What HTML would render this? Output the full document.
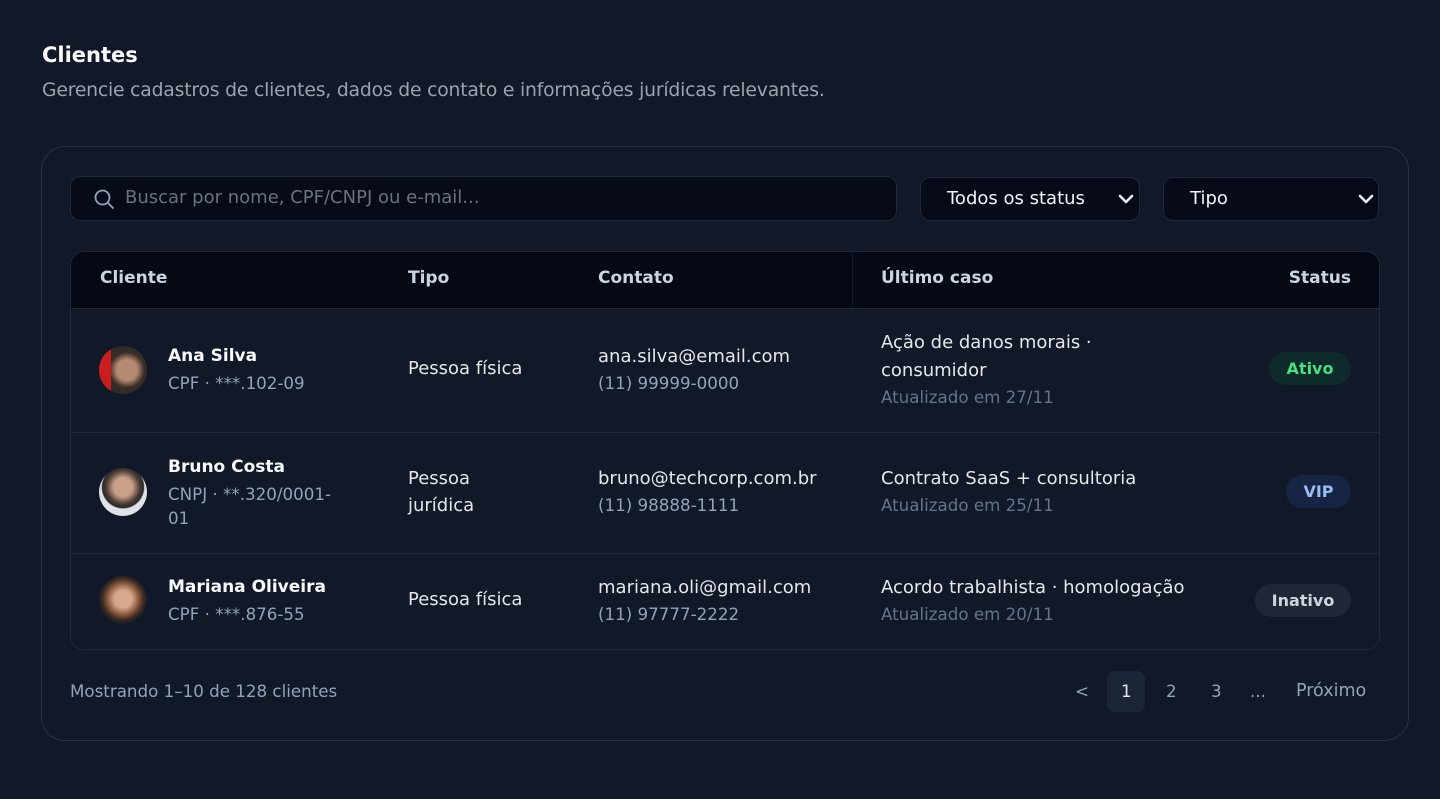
<!DOCTYPE html>
<html><head><meta charset="utf-8"><style>
*{box-sizing:border-box;margin:0;padding:0}
body{width:1440px;height:799px;background:#111827;font-family:"DejaVu Sans","Liberation Sans",sans-serif;color:#e5e7eb;position:relative;overflow:hidden}
.a{position:absolute;white-space:nowrap}
.t{font-size:18px;color:#e5e7eb}
.s{font-size:16.7px;color:#94a3b8}
.m{font-size:16.7px;color:#64748b}
.h{font-size:17px;font-weight:bold;color:#cbd5e1;top:268px}
.av{position:absolute;width:48px;height:48px;border-radius:50%;left:99px}
.badge{position:absolute;height:33px;border-radius:17px;font-size:16px;font-weight:bold;display:flex;align-items:center;justify-content:center}
.line{position:absolute;left:71px;width:1308px;height:1px;background:#1f2a3b}
.n{font-size:17px;font-weight:bold;color:#f8fafc}
</style></head><body>
<div class="a" style="left:42px;top:43px;font-size:21px;font-weight:bold;color:#f8fafc">Clientes</div>
<div class="a" style="left:42px;top:80px;font-size:18.8px;color:#9ca3af;letter-spacing:-0.2px">Gerencie cadastros de clientes, dados de contato e informações jurídicas relevantes.</div>

<div class="a" style="left:41px;top:146px;width:1368px;height:595px;border:1px solid #263247;border-radius:24px;background:#111827"></div>

<div class="a" style="left:70px;top:176px;width:827px;height:45px;border:1px solid #1e293b;border-radius:10px;background:#060b17"></div>
<svg class="a" style="left:92px;top:187px" width="24" height="24" viewBox="0 0 24 24" fill="none" stroke="#94a3b8" stroke-width="1.8" stroke-linecap="round"><circle cx="10.5" cy="10.5" r="7"/><path d="M16 16l5 5"/></svg>
<div class="a" style="left:125px;top:187px;font-size:18px;color:#6b7280">Buscar por nome, CPF/CNPJ ou e-mail...</div>

<div class="a" style="left:920px;top:177px;width:220px;height:44px;border:1px solid #1e293b;border-radius:10px;background:#060b17"></div>
<div class="a t" style="left:947px;top:188px;color:#f1f5f9">Todos os status</div>
<svg class="a" style="left:1117px;top:191px" width="18" height="16" viewBox="0 0 18 16" fill="none" stroke="#f1f5f9" stroke-width="2.6" stroke-linecap="round" stroke-linejoin="round"><path d="M3 5l6 6 6-6"/></svg>
<div class="a" style="left:1163px;top:177px;width:216px;height:44px;border:1px solid #1e293b;border-radius:10px;background:#060b17"></div>
<div class="a t" style="left:1190px;top:188px;color:#f1f5f9">Tipo</div>
<svg class="a" style="left:1357px;top:191px" width="18" height="16" viewBox="0 0 18 16" fill="none" stroke="#f1f5f9" stroke-width="2.6" stroke-linecap="round" stroke-linejoin="round"><path d="M3 5l6 6 6-6"/></svg>

<div class="a" style="left:70px;top:251px;width:1310px;height:399px;border:1px solid #1e293b;border-radius:14px;background:#111827;overflow:hidden">
 <div style="height:57px;background:#050914;border-bottom:1px solid #1f2a3b"></div>
</div>
<div class="a" style="left:852px;top:252px;width:1px;height:56px;background:#111a2a"></div>
<div class="a h" style="left:100px">Cliente</div>
<div class="a h" style="left:408px">Tipo</div>
<div class="a h" style="left:598px">Contato</div>
<div class="a h" style="left:881px">Último caso</div>
<div class="a h" style="right:89px">Status</div>

<div class="line" style="top:432px"></div>
<div class="line" style="top:553px"></div>

<!-- row 1 -->
<div class="av" style="top:346px;background:linear-gradient(90deg,#c81e1e 0 25%,transparent 25%),radial-gradient(circle at 58% 50%,#b48a70 0 28%,#3a2c26 48%,#2a2a2a 70%)"></div>
<div class="a n" style="left:168px;top:346px">Ana Silva</div>
<div class="a s" style="left:168px;top:373px">CPF · ***.102-09</div>
<div class="a t" style="left:408px;top:358px">Pessoa física</div>
<div class="a t" style="left:598px;top:346px">ana.silva@email.com</div>
<div class="a s" style="left:598px;top:373px">(11) 99999-0000</div>
<div class="a t" style="left:881px;top:332px">Ação de danos morais ·</div>
<div class="a t" style="left:881px;top:360px">consumidor</div>
<div class="a m" style="left:881px;top:387px">Atualizado em 27/11</div>
<div class="badge" style="left:1269px;top:352px;width:82px;background:#0e2b2b;color:#4ade80">Ativo</div>

<!-- row 2 -->
<div class="av" style="top:468px;background:radial-gradient(circle at 50% 40%,#c9a08a 0 25%,#4a3a34 45%,#2a2a2a 55%,#dfe3e8 58%)"></div>
<div class="a n" style="left:168px;top:457px">Bruno Costa</div>
<div class="a s" style="left:168px;top:484px">CNPJ · **.320/0001-</div>
<div class="a s" style="left:168px;top:508px">01</div>
<div class="a t" style="left:408px;top:468px">Pessoa</div>
<div class="a t" style="left:408px;top:495px">jurídica</div>
<div class="a t" style="left:598px;top:468px">bruno@techcorp.com.br</div>
<div class="a s" style="left:598px;top:495px">(11) 98888-1111</div>
<div class="a t" style="left:881px;top:468px">Contrato SaaS + consultoria</div>
<div class="a m" style="left:881px;top:495px">Atualizado em 25/11</div>
<div class="badge" style="left:1286px;top:475px;width:65px;background:#172544;color:#9dbcf2">VIP</div>

<!-- row 3 -->
<div class="av" style="top:576px;background:radial-gradient(circle at 50% 48%,#d6a88e 0 25%,#8a5a3c 45%,#3a2a22 60%,#1c1f26 70%)"></div>
<div class="a n" style="left:168px;top:577px">Mariana Oliveira</div>
<div class="a s" style="left:168px;top:604px">CPF · ***.876-55</div>
<div class="a t" style="left:408px;top:589px">Pessoa física</div>
<div class="a t" style="left:598px;top:577px">mariana.oli@gmail.com</div>
<div class="a s" style="left:598px;top:604px">(11) 97777-2222</div>
<div class="a t" style="left:881px;top:577px">Acordo trabalhista · homologação</div>
<div class="a m" style="left:881px;top:604px">Atualizado em 20/11</div>
<div class="badge" style="left:1255px;top:584px;width:96px;background:#1f2636;color:#d1d5db">Inativo</div>

<!-- footer -->
<div class="a s" style="left:70px;top:681px">Mostrando 1–10 de 128 clientes</div>
<div class="a s" style="left:1075px;top:681px">&lt;</div>
<div class="a" style="left:1107px;top:671px;width:38px;height:41px;border-radius:8px;background:#1c2536"></div>
<div class="a s" style="left:1121px;top:681px;color:#e5e7eb">1</div>
<div class="a s" style="left:1166px;top:681px">2</div>
<div class="a s" style="left:1211px;top:681px">3</div>
<div class="a s" style="left:1250px;top:681px">...</div>
<div class="a" style="left:1296px;top:681px;font-size:17.5px;color:#94a3b8">Próximo</div>
</body></html>
